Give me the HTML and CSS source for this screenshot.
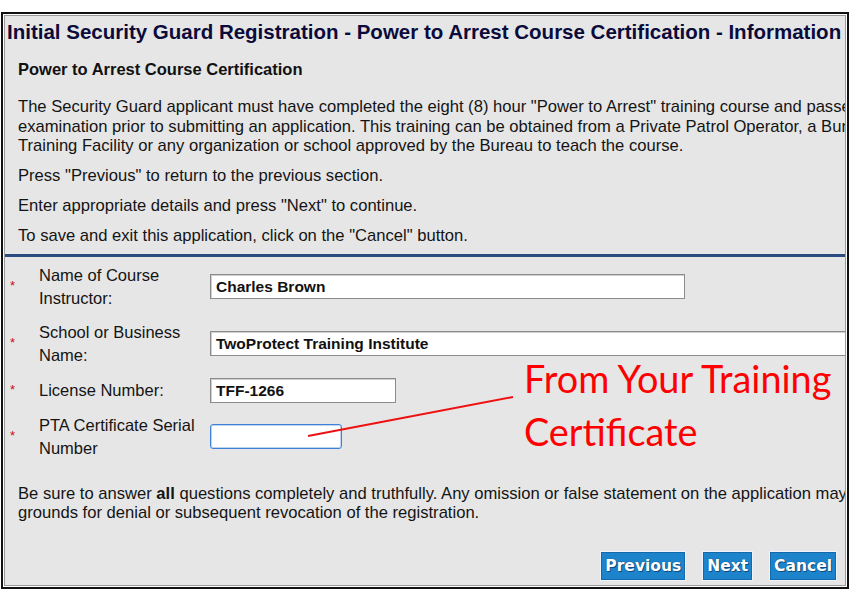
FILE: index.html
```html
<!DOCTYPE html>
<html>
<head>
<meta charset="utf-8">
<title>Initial Security Guard Registration</title>
<link rel="stylesheet" href="styles.css">
</head>
<body>
<div class="frame">
  <div class="panel">
    <h1 class="title">Initial Security Guard Registration - Power to Arrest Course Certification - Information</h1>
    <div class="intro">
      <h2 class="subtitle">Power to Arrest Course Certification</h2>
      <p class="para">The Security Guard applicant must have completed the eight (8) hour "Power to Arrest" training course and passed the<br>examination prior to submitting an application. This training can be obtained from a Private Patrol Operator, a Bureau-approved<br>Training Facility or any organization or school approved by the Bureau to teach the course.</p>
      <p class="para">Press "Previous" to return to the previous section.</p>
      <p class="para">Enter appropriate details and press "Next" to continue.</p>
      <p class="para">To save and exit this application, click on the "Cancel" button.</p>
    </div>
    <div class="form">
      <div class="row">
        <span class="req">*</span>
        <label class="label">Name of Course<br>Instructor:</label>
        <div class="field w-name">Charles Brown</div>
      </div>
      <div class="row">
        <span class="req">*</span>
        <label class="label">School or Business<br>Name:</label>
        <div class="field w-school">TwoProtect Training Institute</div>
      </div>
      <div class="row">
        <span class="req">*</span>
        <label class="label">License Number:</label>
        <div class="field w-license">TFF-1266</div>
      </div>
      <div class="row">
        <span class="req">*</span>
        <label class="label">PTA Certificate Serial<br>Number</label>
        <div class="field field-focus w-serial"></div>
      </div>
      <p class="para disclaimer">Be sure to answer <b>all</b> questions completely and truthfully. Any omission or false statement on the application may be<br>grounds for denial or subsequent revocation of the registration.</p>
      <div class="buttons">
        <span class="btn">Previous</span>
        <span class="btn">Next</span>
        <span class="btn">Cancel</span>
      </div>
    </div>
    <svg class="arrow" width="841" height="568" viewBox="0 0 841 568">
      <line x1="303" y1="420" x2="508" y2="381" stroke="#ee1111" stroke-width="2"/>
    </svg>
    <div class="note">From Your Training<br>Certificate</div>
  </div>
</div>
</body>
</html>
```
FILE: styles.css
```css
html, body {
  margin: 0;
  padding: 0;
  background: #ffffff;
}
body {
  padding: 12px 0 0 1px;
  font-family: "Liberation Sans", Arial, sans-serif;
}
.frame {
  width: 848px;
  height: 577px;
  box-sizing: border-box;
  border: 2px solid #111111;
  padding: 1px;
  background: #ffffff;
}
.panel {
  position: relative;
  height: 100%;
  box-sizing: border-box;
  border: 1px solid #9a9a9a;
  background: #e6e6e6;
  overflow: hidden;
}
.title {
  margin: 0;
  padding: 5px 0 0 2px;
  font-size: 20.5px;
  line-height: 22px;
  font-weight: bold;
  color: #0b0b3b;
  white-space: nowrap;
}
.intro {
  padding: 16px 0 0 13px;
}
.subtitle {
  margin: 0 0 18px 0;
  font-size: 16.5px;
  line-height: 20px;
  font-weight: bold;
  color: #111111;
}
.para {
  margin: 0 0 10.5px 0;
  font-size: 16.6px;
  line-height: 19.5px;
  color: #141414;
  white-space: nowrap;
}
.intro .para:last-child {
  margin-bottom: 0;
}
.form {
  margin-top: 8px;
  border-top: 3px solid #2b4c7e;
  padding-top: 7px;
  display: flex;
  flex-direction: column;
}
.row {
  display: grid;
  grid-template-columns: 34px 171px 1fr;
  align-items: center;
  margin-bottom: 11px;
}
.req {
  padding-left: 5px;
  color: #c81010;
  font-size: 13px;
  line-height: 13px;
  padding-bottom: 2px;
}
.label {
  font-size: 16.5px;
  line-height: 23px;
  color: #141414;
}
.field {
  box-sizing: border-box;
  height: 25px;
  background: #ffffff;
  border: 1px solid #8c8c8c;
  box-shadow: inset 1px 1px 0 #cfcfcf;
  padding: 0 0 0 5px;
  font-size: 15.5px;
  line-height: 23px;
  font-weight: bold;
  color: #111111;
  white-space: nowrap;
}
.field-focus {
  border: 1px solid #3f80d8;
  border-radius: 3px;
  box-shadow: inset 0 0 0 1px #bcd6f2;
}
.w-name { width: 475px; }
.w-school { width: 700px; }
.w-license { width: 186px; }
.w-serial { width: 132px; }
.disclaimer {
  margin: 13px 0 0 13px;
}
.buttons {
  display: flex;
  justify-content: flex-end;
  gap: 18px;
  margin-top: 29px;
  padding-right: 9px;
}
.btn {
  box-sizing: border-box;
  height: 28px;
  padding: 0 3px;
  background: #1d84cc;
  border: 1px solid #1569ab;
  box-shadow: 0 0 0 1px #eef4fa;
  font-family: "DejaVu Sans", Verdana, sans-serif;
  font-weight: bold;
  font-size: 15.5px;
  line-height: 26px;
  color: #ffffff;
  text-shadow: 0 0 1px #0a3e6a, 1px 1px 0 #0d4f85;
}
.arrow {
  position: absolute;
  left: 0;
  top: 0;
  pointer-events: none;
}
.note {
  position: absolute;
  left: 519px;
  top: 336px;
  font-family: Lato, "Open Sans", sans-serif;
  font-size: 37.8px;
  line-height: 53px;
  color: #ff0000;
  white-space: nowrap;
}
```
